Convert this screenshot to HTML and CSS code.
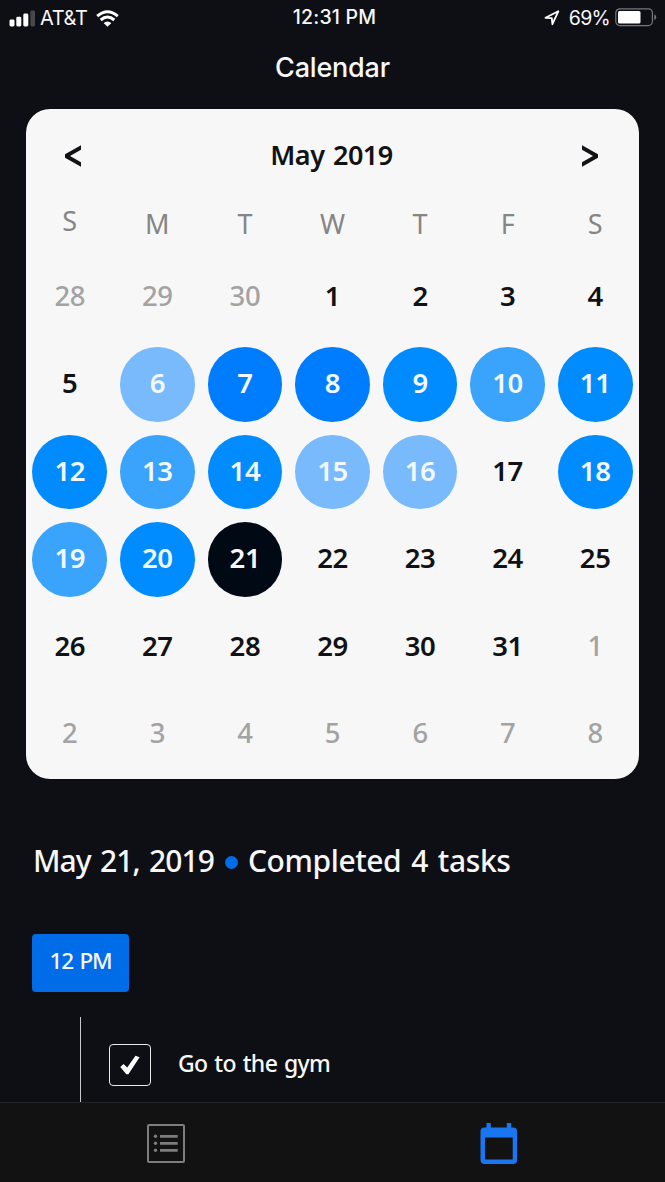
FILE: index.html
```html
<!DOCTYPE html>
<html lang="en">
<head>
<meta charset="utf-8">
<title>Calendar</title>
<link rel="stylesheet" href="styles.css">
</head>
<body>
<div class="screen">
  <header class="status">
    <div class="status-left">
      <svg class="signal" width="27" height="17" viewBox="0 0 27 17"><g fill="#fff"><rect x="0.5" y="9.5" width="5" height="7" rx="1.4"/><rect x="7.3" y="6.7" width="5" height="9.8" rx="1.4"/><rect x="14.3" y="3.5" width="5" height="13" rx="1.4"/></g><rect x="21.4" y="0.5" width="4.6" height="16" rx="1.4" fill="#47484c"/></svg>
      <span class="carrier">AT&amp;T</span>
      <svg class="wifi" width="23" height="17" viewBox="0 0 23 17"><g fill="none" stroke="#fff" stroke-width="3"><path d="M1.2 6.1Q11.5-2.7 21.8 6.1"/><path d="M4.7 10Q11.5 4.1 18.3 10"/></g><path d="M7.6 13Q11.5 9.8 15.4 13L11.5 16.8Z" fill="#fff"/></svg>
    </div>
    <span class="time">12:31 PM</span>
    <div class="status-right">
      <svg class="location" width="16" height="16" viewBox="0 0 16 16"><path d="M1.5 7.8 14.3 1.3 8.4 14.2 7.8 8.1Z" fill="none" stroke="#fff" stroke-width="1.8" stroke-linejoin="round"/></svg>
      <span class="percent">69%</span>
      <svg class="battery" width="42" height="19" viewBox="0 0 42 19"><rect x=".8" y=".8" width="36.6" height="16.8" rx="4" fill="none" stroke="#77787b" stroke-width="1.2"/><rect x="3" y="3" width="22.5" height="12.5" rx="1.5" fill="#fff"/><path d="M39.3 6.3Q41.2 7.2 41.2 9.3T39.3 12.3Z" fill="#77787b"/></svg>
    </div>
  </header>
  <h1 class="title"><span>Calendar</span></h1>

  <main class="content">
    <section class="card">
      <div class="month">
        <svg width="18" height="22" viewBox="0 0 18 22"><path d="M17 .2V4.700L6 11 17 17.300V21.800L1 12.800V9.200Z" fill="#111216"/></svg>
        <span class="month-name">May 2019</span>
        <svg width="18" height="22" viewBox="0 0 18 22"><path d="M1 .2V4.700L12 11 1 17.300V21.800L17 12.800V9.200Z" fill="#111216"/></svg>
      </div>
      <div class="weekdays"><span class="raised">S</span><span>M</span><span>T</span><span>W</span><span>T</span><span>F</span><span>S</span></div>
      <div class="days">
        <span class="out">28</span><span class="out">29</span><span class="out">30</span><span>1</span><span>2</span><span>3</span><span>4</span>
        <span>5</span><span class="l1">6</span><span class="l4">7</span><span class="l4">8</span><span class="l3">9</span><span class="l2">10</span><span class="l3">11</span>
        <span class="l3">12</span><span class="l2">13</span><span class="l3">14</span><span class="l1">15</span><span class="l1">16</span><span>17</span><span class="l3">18</span>
        <span class="l2">19</span><span class="l3">20</span><span class="today">21</span><span>22</span><span>23</span><span>24</span><span>25</span>
        <span>26</span><span>27</span><span>28</span><span>29</span><span>30</span><span>31</span><span class="out">1</span>
        <span class="out">2</span><span class="out">3</span><span class="out">4</span><span class="out">5</span><span class="out">6</span><span class="out">7</span><span class="out">8</span>
      </div>
    </section>

    <h2 class="summary"><span class="date">May 21, 2019</span><i class="dot"></i><span class="done">Completed 4 tasks</span></h2>
    <div class="hour"><span>12 PM</span></div>
    <div class="task">
      <div class="box"><svg width="20" height="20" viewBox="0 0 20 20"><path d="M0.3 12 3.5 9.100 7.200 12.400 15.500 .8 19.600 2.300 8.400 19.300H6.300Z" fill="#fff"/></svg></div>
      <span class="task-name">Go to the gym</span>
    </div>
  </main>

  <nav class="tabs">
    <div class="tab"><svg width="38" height="39" viewBox="0 0 38 39"><rect x="1" y="1" width="36" height="37" rx="1" fill="none" stroke="#7d7d7d" stroke-width="2"/><g fill="#7d7d7d"><circle cx="8.5" cy="12.3" r="1.7"/><circle cx="8.5" cy="19.3" r="1.7"/><circle cx="8.5" cy="26.3" r="1.7"/><path d="M13 11h17.7v2.7H13zM13 18h17.7v2.7H13zM13 25h17.7v2.7H13z"/></g></svg></div>
    <div class="tab"><svg width="38" height="42" viewBox="0 0 38 42"><path fill="#1a75f0" fill-rule="evenodd" d="M6.500 0h4.300v4.500h16V0h4.400v4.500h1.900a4 4 0 0 1 4 4V37a4 4 0 0 1-4 4h-28.600a4 4 0 0 1-4-4V8.500a4 4 0 0 1 4-4h2zM5 14.500V36.500H32.700V14.500z"/></svg></div>
  </nav>
</div>
</body>
</html>
```
FILE: styles.css
```css
* { box-sizing: border-box; }
body { margin: 0; background: #0e0f14; }
.screen {
  width: 665px;
  height: 1182px;
  display: flex;
  flex-direction: column;
  overflow: hidden;
  background: #0e0f14;
  color: #f7f7f9;
  font-family: "Noto Sans", sans-serif;
}
svg { display: block; flex: none; }
span { white-space: nowrap; }

.status {
  height: 34px;
  flex: none;
  display: grid;
  grid-template-columns: 1fr auto 1fr;
  align-items: center;
  padding: 0 8px 0 9px;
  font: 400 20px/34px Inter, sans-serif;
}
.status-left, .status-right { display: flex; align-items: center; }
.status-right { justify-content: flex-end; padding-bottom: 1px; }
.carrier { margin-left: 4px; letter-spacing: -.4px; }
.wifi { margin-left: 9px; }
.time { padding: 0 0 2px 3px; font-weight: 500; font-size: 19.5px; letter-spacing: .2px; }
.percent { margin: 0 5px 0 9px; font-size: 19.5px; letter-spacing: -.7px; }

.title {
  height: 75px;
  flex: none;
  margin: 0;
  padding-top: 14px;
  text-align: center;
  font: 500 27px/40px Inter, sans-serif;
  letter-spacing: -.2px;
}

.content { flex: 1; min-height: 0; padding: 0 26px; }
.card {
  height: 670px;
  background: #f7f7f7;
  border-radius: 24px;
  color: #111216;
}
.month {
  height: 92px;
  display: flex;
  align-items: center;
  justify-content: space-between;
  padding: 2px 40px 0 38px;
}
.month-name { padding-bottom: 4px; font-size: 27px; font-weight: 600; letter-spacing: -.5px; word-spacing: 2px; }
.weekdays, .days { display: grid; grid-template-columns: repeat(7, 1fr); justify-items: center; }
.weekdays { height: 52px; line-height: 46px; font-size: 27px; color: #858585; }
.weekdays .raised { margin-top: -3px; }
.days { grid-auto-rows: 87.6px; align-items: center; font-size: 27.5px; font-weight: 600; letter-spacing: -.4px; }
.days span {
  width: 74.6px;
  height: 74.6px;
  border-radius: 50%;
  text-align: center;
  line-height: 72px;
}
.days .out { color: #a3a3a3; font-weight: 500; }
.days .l1 { background: #78bafb; color: #f2f8fe; }
.days .l2 { background: #3aa3fb; color: #f2f8fe; }
.days .l3 { background: #008cff; color: #f2f8fe; }
.days .l4 { background: #007dff; color: #f2f8fe; }
.days .today { background: #000914; color: #f7f7f7; }

.summary {
  height: 155px;
  margin: 0;
  padding: 62px 6px 0 7px;
  display: flex;
  align-items: flex-start;
  font-size: 30px;
  font-weight: 500;
  line-height: 40px;
}
.date { letter-spacing: -.95px; word-spacing: 2.5px; }
.done { letter-spacing: -.4px; word-spacing: 2.5px; }
.dot { width: 13px; height: 13px; margin: 15px 10px 0 11px; border-radius: 50%; background: #006ce8; }
.hour {
  width: 97px;
  height: 58px;
  margin-left: 6px;
  border-radius: 4px;
  background: #006ce8;
  text-align: center;
  font-size: 22.5px;
  font-weight: 500;
  letter-spacing: -1.2px;
  word-spacing: 2px;
  line-height: 54px;
}
.task {
  height: 87px;
  margin: 25px 0 0 54px;
  padding: 27px 0 0 28px;
  border-left: 1.5px solid #c8c8ca;
  display: flex;
  align-items: flex-start;
}
.box {
  width: 42px;
  height: 42px;
  border: 1.5px solid #e9e9ea;
  border-radius: 4px;
  display: grid;
  place-items: center;
}
.task-name { margin-left: 27px; font-size: 23px; font-weight: 500; letter-spacing: -.65px; word-spacing: 1.5px; line-height: 38px; }

.tabs {
  height: 80px;
  flex: none;
  display: grid;
  grid-template-columns: 1fr 1fr;
  background: #121212;
  border-top: 1px solid #232225;
}
.tab { display: grid; place-items: center; padding-top: 2px; }
```
